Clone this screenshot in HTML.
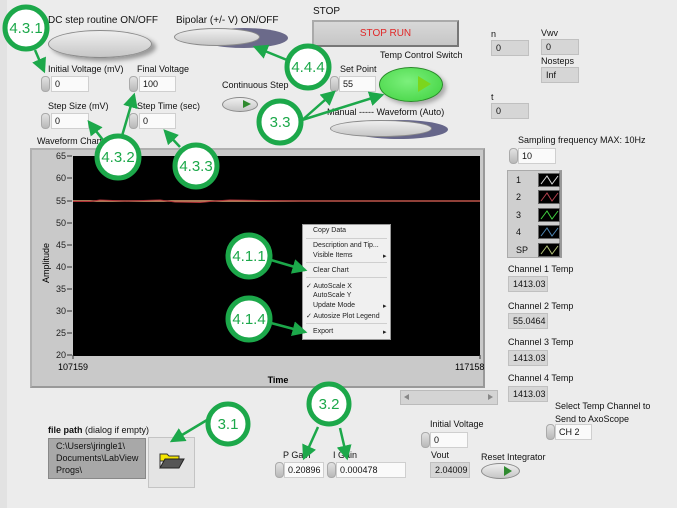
<!DOCTYPE html>
<html><head><meta charset="utf-8"><style>
*{margin:0;padding:0;box-sizing:border-box}
body{width:677px;height:508px;background:#ececec;position:relative;overflow:hidden;font-family:"Liberation Sans",sans-serif;font-size:9px;color:#111}
.a{position:absolute;white-space:nowrap}
.box{position:absolute;background:#fafafa;border:1px solid #cfcfcf;font-size:9px;padding:2px 3px;height:16px;line-height:11px}
.ind{position:absolute;background:#d6d6d6;border:1px solid #c0c0c0;font-size:9px;padding:2px 4px;height:16px;line-height:11px}
.spin{position:absolute;width:9px;height:16px;background:linear-gradient(#e2e2e2,#b8b8b8);border-radius:4px;border:1px solid #aaa}
.oval{position:absolute;border-radius:50%;background:linear-gradient(#efefef,#c6c6c6);border:1px solid #8a8a8a}
.mi{position:absolute;left:10px;font-size:7px;color:#222}
.sep{position:absolute;left:3px;right:3px;height:1px;background:#cfcfcf}
.sw{position:absolute;left:30px;width:22px;height:14px;background:#000;border:1px solid #666}
.ln{position:absolute;left:8px;font-size:9px}
</style></head><body>
<div class="a" style="left:0;top:0;width:7px;height:508px;background:#e2e2e2"></div>
<!-- top controls -->
<div class="a" style="left:48px;top:15px;font-size:10px">DC step routine ON/OFF</div>
<div class="oval" style="left:48px;top:30px;width:104px;height:28px;box-shadow:4px 3px 4px #999"></div>
<div class="a" style="left:176px;top:15px;font-size:10px">Bipolar (+/- V) ON/OFF</div>
<div class="a" style="left:200px;top:28px;width:88px;height:20px;border-radius:50%;background:#6b6a8a"></div>
<div class="oval" style="left:174px;top:28px;width:86px;height:18px"></div>
<div class="a" style="left:313px;top:6px;font-size:10px">STOP</div>
<div class="a" style="left:312px;top:20px;width:147px;height:27px;background:linear-gradient(#d8d8d8,#c6c6c6);border:2px solid #777;border-top-color:#aaa;border-left-color:#aaa;color:#e02828;font-size:10px;text-align:center;line-height:23px">STOP RUN</div>

<div class="a" style="left:48px;top:64px">Initial Voltage (mV)</div>
<div class="spin" style="left:41px;top:76px"></div><div class="box" style="left:51px;top:76px;width:38px">0</div>
<div class="a" style="left:137px;top:64px">Final Voltage</div>
<div class="spin" style="left:129px;top:76px"></div><div class="box" style="left:139px;top:76px;width:37px">100</div>
<div class="a" style="left:48px;top:101px">Step Size (mV)</div>
<div class="spin" style="left:41px;top:113px"></div><div class="box" style="left:51px;top:113px;width:38px">0</div>
<div class="a" style="left:137px;top:101px">Step Time (sec)</div>
<div class="spin" style="left:129px;top:113px"></div><div class="box" style="left:139px;top:113px;width:37px">0</div>
<div class="a" style="left:37px;top:136px">Waveform Chart</div>

<div class="a" style="left:222px;top:80px">Continuous Step</div>
<div class="oval" style="left:222px;top:97px;width:36px;height:15px"></div>
<div class="a" style="left:243px;top:100px;border-left:8px solid #2f8a2f;border-top:4.5px solid transparent;border-bottom:4.5px solid transparent"></div>

<div class="a" style="left:340px;top:64px">Set Point</div>
<div class="spin" style="left:330px;top:76px"></div><div class="box" style="left:339px;top:76px;width:37px">55</div>
<div class="a" style="left:380px;top:50px">Temp Control Switch</div>
<div class="a" style="left:379px;top:67px;width:64px;height:35px;border-radius:50%;background:radial-gradient(ellipse at 45% 40%,#7cf07c,#3ed13e);border:1px solid #2a8a2a;box-shadow:3px 3px 4px #aaa"></div>
<div class="a" style="left:418px;top:76px;border-left:13px solid #7cd61c;border-top:8px solid transparent;border-bottom:8px solid transparent"></div>
<div class="a" style="left:327px;top:107px">Manual ----- Waveform (Auto)</div>
<div class="a" style="left:350px;top:120px;width:98px;height:19px;border-radius:50%;background:#66668a"></div>
<div class="oval" style="left:330px;top:120px;width:102px;height:17px"></div>

<div class="a" style="left:491px;top:29px">n</div><div class="ind" style="left:491px;top:40px;width:38px">0</div>
<div class="a" style="left:541px;top:28px">Vwv</div><div class="ind" style="left:541px;top:39px;width:38px">0</div>
<div class="a" style="left:541px;top:56px">Nosteps</div><div class="ind" style="left:541px;top:67px;width:38px">Inf</div>
<div class="a" style="left:491px;top:92px">t</div><div class="ind" style="left:491px;top:103px;width:38px">0</div>
<div class="a" style="left:518px;top:135px">Sampling frequency MAX: 10Hz</div>
<div class="spin" style="left:509px;top:148px"></div><div class="box" style="left:518px;top:148px;width:38px">10</div>

<!-- legend -->
<div class="a" style="left:507px;top:170px;width:55px;height:88px;background:#cfcfcf;border:1px solid #aaa;border-right:3px solid #999">
<div class="ln" style="top:4px">1</div><div class="sw" style="top:2px"><svg width="20" height="12"><path d="M2 10L8 2L13 10L19 2" stroke="#ddd" fill="none"/></svg></div>
<div class="ln" style="top:21px">2</div><div class="sw" style="top:19px"><svg width="20" height="12"><path d="M2 10L8 2L13 10L19 2" stroke="#b5414e" fill="none"/></svg></div>
<div class="ln" style="top:39px">3</div><div class="sw" style="top:37px"><svg width="20" height="12"><path d="M2 10L8 2L13 10L19 2" stroke="#3fd13f" fill="none"/></svg></div>
<div class="ln" style="top:56px">4</div><div class="sw" style="top:54px"><svg width="20" height="12"><path d="M2 10L8 2L13 10L19 2" stroke="#4f86b4" fill="none"/></svg></div>
<div class="ln" style="top:74px">SP</div><div class="sw" style="top:72px"><svg width="20" height="12"><path d="M2 10L8 2L13 10L19 2" stroke="#b5c47a" fill="none"/></svg></div>
</div>
<div class="a" style="left:508px;top:264px">Channel 1 Temp</div><div class="ind" style="left:508px;top:276px;width:40px">1413.03</div>
<div class="a" style="left:508px;top:301px">Channel 2 Temp</div><div class="ind" style="left:508px;top:313px;width:40px">55.0464</div>
<div class="a" style="left:508px;top:337px">Channel 3 Temp</div><div class="ind" style="left:508px;top:350px;width:40px">1413.03</div>
<div class="a" style="left:508px;top:373px">Channel 4 Temp</div><div class="ind" style="left:508px;top:386px;width:40px">1413.03</div>
<div class="a" style="left:555px;top:400px;line-height:13px">Select Temp Channel to<br>Send to AxoScope</div>
<div class="spin" style="left:546px;top:424px"></div><div class="box" style="left:555px;top:424px;width:37px">CH 2</div>

<!-- chart -->
<div class="a" style="left:30px;top:148px;width:455px;height:240px;background:#c9c9c9;border:2px solid #b0b0b0;border-right-color:#999;border-bottom-color:#999"></div>
<div class="a" style="left:73px;top:156px;width:407px;height:200px;background:#000"></div>
<svg class="a" style="left:0;top:140px" width="485" height="250">
<g font-family="Liberation Sans" font-size="9" fill="#222" text-anchor="end">
<text x="66" y="19">65</text><text x="66" y="41">60</text><text x="66" y="64">55</text><text x="66" y="86">50</text><text x="66" y="108">45</text><text x="66" y="130">40</text><text x="66" y="152">35</text><text x="66" y="174">30</text><text x="66" y="196">25</text><text x="66" y="218">20</text>
</g>
<g stroke="#333"><path d="M67 16h5M67 38h5M67 61h5M67 83h5M67 105h5M67 127h5M67 149h5M67 171h5M67 193h5M67 215h5M73 215v4M480 215v4"/></g>
<path d="M73 61H480" stroke="#e0a070" stroke-width="1.5"/>
<path d="M73 61.5H90L100 60L125 61L160 60L175 62L200 62.5L215 61L230 60L260 60.5L300 61H480" stroke="#b03038" stroke-width="1" fill="none"/>
<text x="49" y="123" font-family="Liberation Sans" font-size="9" transform="rotate(-90 49 123)" text-anchor="middle">Amplitude</text>
<text x="58" y="230" font-family="Liberation Sans" font-size="9">107159</text>
<text x="455" y="230" font-family="Liberation Sans" font-size="9">117158</text>
<text x="278" y="243" font-family="Liberation Sans" font-size="9" font-weight="bold" text-anchor="middle">Time</text>
</svg>
<!-- scrollbar -->
<div class="a" style="left:400px;top:390px;width:98px;height:15px;background:#d4d4d4;border:1px solid #bbb"></div>
<div class="a" style="left:404px;top:394px;border-right:5px solid #888;border-top:3.5px solid transparent;border-bottom:3.5px solid transparent"></div>
<div class="a" style="left:488px;top:394px;border-left:5px solid #888;border-top:3.5px solid transparent;border-bottom:3.5px solid transparent"></div>

<!-- context menu -->
<div class="a" style="left:302px;top:224px;width:89px;height:116px;background:#f0f0f0;border:1px solid #999">
<div class="mi" style="top:2px">Copy Data</div><div class="sep" style="top:13px"></div>
<div class="mi" style="top:17px">Description and Tip...</div>
<div class="mi" style="top:27px">Visible Items</div><div class="mi" style="top:27px;left:80px">▸</div>
<div class="sep" style="top:37px"></div>
<div class="mi" style="top:42px">Clear Chart</div><div class="sep" style="top:52px"></div>
<div class="mi" style="top:57px;left:3px">✓ AutoScale X</div>
<div class="mi" style="top:67px">AutoScale Y</div>
<div class="mi" style="top:77px">Update Mode</div><div class="mi" style="top:77px;left:80px">▸</div>
<div class="mi" style="top:87px;left:3px">✓ Autosize Plot Legend</div>
<div class="sep" style="top:98px"></div>
<div class="mi" style="top:103px">Export</div><div class="mi" style="top:103px;left:80px">▸</div>
</div>

<!-- bottom -->
<div class="a" style="left:48px;top:425px"><b>file path</b> (dialog if empty)</div>
<div class="a" style="left:48px;top:438px;width:98px;height:41px;background:#a8a8a8;border:1px solid #888;padding:1px 0 0 7px;font-size:9px;line-height:12px;overflow:hidden">C:\Users\jringle1\<br>Documents\LabView<br>Progs\</div>
<div class="a" style="left:148px;top:437px;width:47px;height:51px;background:#e4e4e4;border:1px solid #c4c4c4"></div>
<svg class="a" style="left:158px;top:450px" width="28" height="22"><path d="M2 4h7l2 2h10v5H2z" fill="#f5e600" stroke="#333"/><path d="M2 18L7 9h19l-5 9z" fill="#555" stroke="#222"/><path d="M2 4v14" stroke="#333"/></svg>
<div class="a" style="left:283px;top:450px">P Gain</div>
<div class="spin" style="left:275px;top:462px"></div><div class="box" style="left:284px;top:462px;width:40px">0.20896</div>
<div class="a" style="left:333px;top:450px">I Gain</div>
<div class="spin" style="left:327px;top:462px"></div><div class="box" style="left:336px;top:462px;width:70px">0.000478</div>
<div class="a" style="left:430px;top:419px">Initial Voltage</div>
<div class="spin" style="left:421px;top:432px"></div><div class="box" style="left:430px;top:432px;width:38px">0</div>
<div class="a" style="left:431px;top:450px">Vout</div>
<div class="ind" style="left:430px;top:462px;width:40px">2.04009</div>
<div class="a" style="left:481px;top:452px">Reset Integrator</div>
<div class="oval" style="left:481px;top:463px;width:39px;height:16px"></div>
<div class="a" style="left:504px;top:466px;border-left:8px solid #2f8a2f;border-top:5px solid transparent;border-bottom:5px solid transparent"></div>

<!-- annotations -->
<svg class="a" style="left:0;top:0" width="677" height="508">
<defs><marker id="m" markerWidth="6" markerHeight="6" refX="5" refY="3" orient="auto"><path d="M0 0L6 3L0 6z" fill="#1ca84a"/></marker></defs>
<g stroke="#1ca84a" stroke-width="2.5" fill="none" marker-end="url(#m)">
<path d="M35 50L44 71"/><path d="M287 60L255 47"/><path d="M300 122L334 92"/><path d="M302 120L382 95"/>
<path d="M122 136L134 95"/><path d="M103 140L89 122"/><path d="M180 147L165 131"/>
<path d="M271 260L305 270"/><path d="M271 323L305 332"/>
<path d="M207 420L172 441"/><path d="M318 427L304 458"/><path d="M340 428L347 458"/>
</g>
<g fill="#fff" stroke="#1ca84a" stroke-width="5">
<circle cx="26" cy="28" r="21"/><circle cx="308" cy="67" r="21"/><circle cx="280" cy="122" r="21"/>
<circle cx="118" cy="157" r="21"/><circle cx="196" cy="166" r="21"/><circle cx="249" cy="256" r="21"/>
<circle cx="249" cy="319" r="21"/><circle cx="228" cy="424" r="20"/><circle cx="329" cy="404" r="20"/>
</g>
<g fill="#1ca84a" font-family="Liberation Sans" font-size="15" text-anchor="middle">
<text x="26" y="33">4.3.1</text><text x="308" y="72">4.4.4</text><text x="280" y="127">3.3</text>
<text x="118" y="162">4.3.2</text><text x="196" y="171">4.3.3</text><text x="249" y="261">4.1.1</text>
<text x="249" y="324">4.1.4</text><text x="228" y="429">3.1</text><text x="329" y="409">3.2</text>
</g>
</svg>
</body></html>
